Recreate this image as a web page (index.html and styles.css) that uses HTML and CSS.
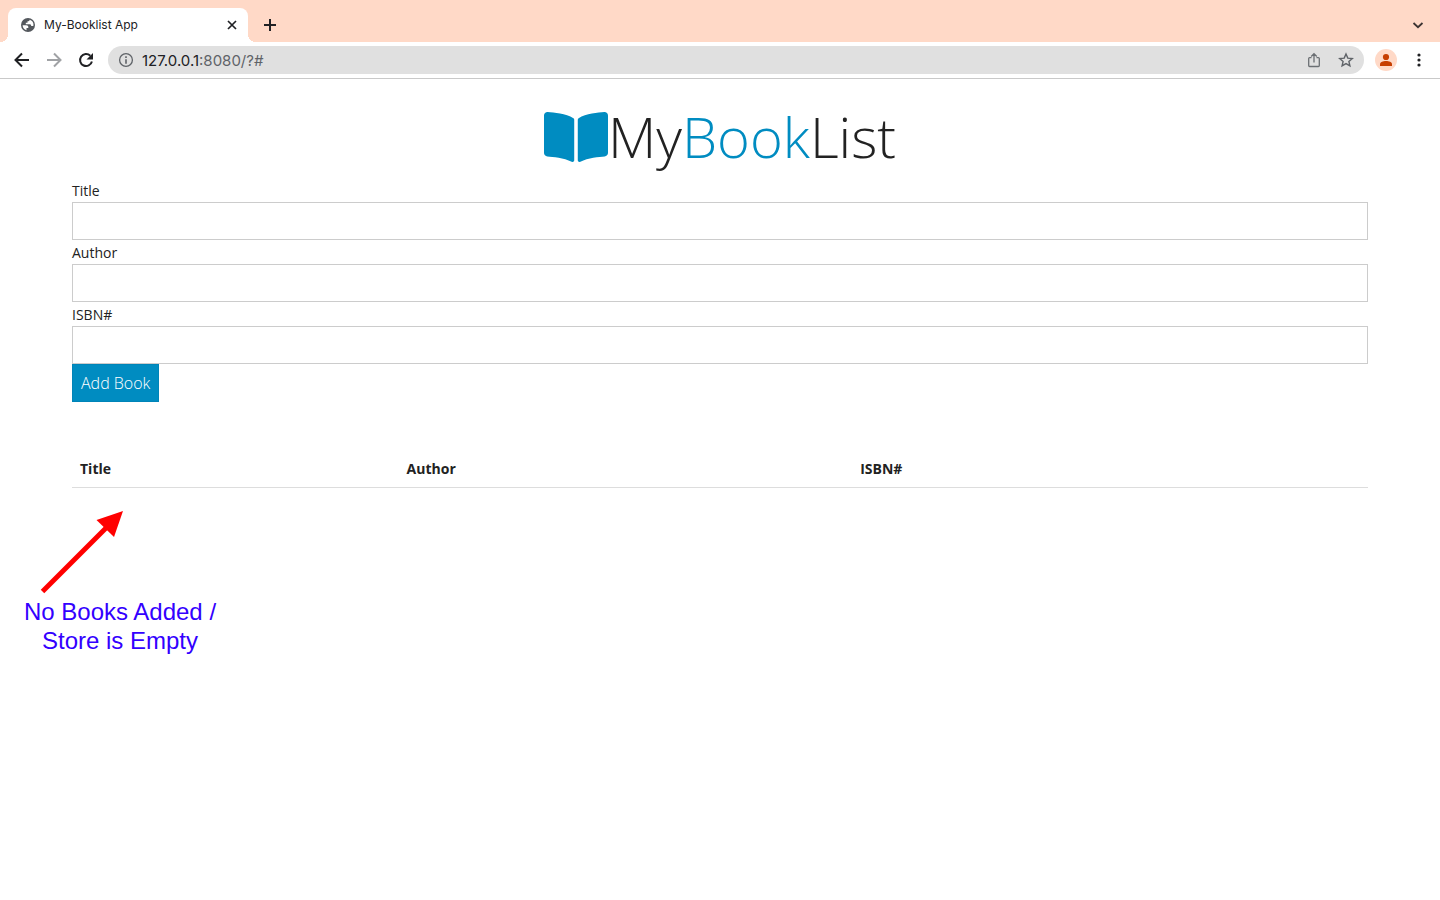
FILE: index.html
```html
<!DOCTYPE html>
<html lang="en">
<head>
<meta charset="utf-8">
<meta name="viewport" content="width=device-width, initial-scale=1">
<title>My-Booklist App</title>
<link rel="stylesheet" href="styles.css">
</head>
<body>
<header class="browser">
  <div class="tabstrip">
    <div class="tab">
      <svg class="favicon" viewBox="0 0 16 16" width="16" height="16" aria-hidden="true"><circle cx="8" cy="8" r="7" fill="#54585d"/><path d="M2.6 8.3 6.2 8.3c1.5 0 2.1.8 2.1 1.7v1.1H6.5v2.2C4.200 12.800 2.700 10.700 2.600 8.300zM9.700 2.800c-.2 1.200-1 1.500-2.200 1.500v1.500H5.800v1.500h3.800c1 0 1.600.6 1.600 1.700h2.100c.8-2.700-.8-5.400-3.600-6.200z" fill="#fff"/></svg>
      <span class="tab-title">My-Booklist App</span>
      <button class="icon-btn tab-close" type="button" aria-label="Close tab"><svg viewBox="0 0 16 16" width="16" height="16"><path d="M4 4l8 8M12 4l-8 8" stroke="#202124" stroke-width="1.700" fill="none"/></svg></button>
    </div>
    <button class="icon-btn new-tab" type="button" aria-label="New tab"><svg viewBox="0 0 16 16" width="16" height="16"><path d="M8 2v12M2 8h12" stroke="#202124" stroke-width="2" fill="none"/></svg></button>
    <button class="icon-btn tab-search" type="button" aria-label="Search tabs"><svg viewBox="0 0 16 16" width="16" height="16"><path d="M3.500 6 8 10.200 12.500 6" stroke="#3c3331" stroke-width="1.800" fill="none"/></svg></button>
  </div>
  <div class="toolbar">
    <button class="icon-btn" type="button" aria-label="Back"><svg viewBox="0 0 16 16" width="16" height="16"><path d="M15 8H2M8 1.500 1.500 8 8 14.500" stroke="#202124" stroke-width="2" fill="none"/></svg></button>
    <button class="icon-btn" type="button" aria-label="Forward"><svg viewBox="0 0 16 16" width="16" height="16"><path d="M1 8h13M8 1.500 14.500 8 8 14.500" stroke="#a0a2a5" stroke-width="2" fill="none"/></svg></button>
    <button class="icon-btn" type="button" aria-label="Reload"><svg viewBox="0 0 16 16" width="16" height="16"><path d="M13.900 9.500A6 6 0 1 1 12.300 3.800" stroke="#202124" stroke-width="2" fill="none"/><path d="M15 1v6.500H8.500z" fill="#202124"/></svg></button>
    <div class="address">
      <svg viewBox="0 0 16 16" width="16" height="16" aria-hidden="true"><circle cx="8" cy="8" r="6.400" fill="none" stroke="#5f6368" stroke-width="1.300"/><path d="M7.200 4.300h1.600v1.600H7.200zM7.200 7.200h1.600v4.500H7.200z" fill="#5f6368"/></svg>
      <span class="url">127.0.0.1<span class="url-rest">:8080/?#</span></span>
      <button class="icon-btn" type="button" aria-label="Share"><svg viewBox="0 0 16 16" width="16" height="16"><path d="M5.500 5.700H3.600q-.9 0-.9.900v7q0 .9.900.9h8.800q.9 0 .9-.9v-7q0-.9-.9-.9h-1.900M8 10.500V1.800M5.200 4.500 8 1.700l2.800 2.800" stroke="#6b6f73" stroke-width="1.300" fill="none"/></svg></button>
      <button class="icon-btn" type="button" aria-label="Bookmark this page"><svg viewBox="0 0 16 16" width="16" height="16"><path d="M8 2l1.800 4.100 4.500.4-3.400 3 1 4.400L8 11.600l-3.900 2.300 1-4.400-3.400-3 4.500-.4z" stroke="#5f6368" stroke-width="1.400" fill="none"/></svg></button>
    </div>
    <button class="icon-btn profile" type="button" aria-label="Profile"><svg viewBox="0 0 22 22" width="22" height="22"><circle cx="11" cy="11" r="11" fill="#ffd9c7"/><circle cx="11" cy="8" r="3.100" fill="#c73e00"/><path d="M5 17v-1.600c0-2.200 3-3.300 6-3.300s6 1.100 6 3.300V17z" fill="#c73e00"/></svg></button>
    <button class="icon-btn" type="button" aria-label="Menu"><svg viewBox="0 0 16 16" width="16" height="16" fill="#202124"><circle cx="8" cy="3" r="1.600"/><circle cx="8" cy="8" r="1.600"/><circle cx="8" cy="13" r="1.600"/></svg></button>
  </div>
</header>
<main class="container">
  <h1 class="brand">
    <svg viewBox="0 32 576 448" width="64" height="50" aria-hidden="true"><path fill="#008cc1" d="M542.220 32.050c-54.800 3.110-163.720 14.430-230.960 55.590-4.640 2.840-7.270 7.890-7.270 13.170v363.870c0 11.550 12.630 18.850 23.280 13.490 69.180-34.820 169.230-44.320 218.700-46.920 16.890-.89 30.020-14.430 30.020-30.660V62.750c.01-17.710-15.350-31.740-33.770-30.700zM264.730 87.640C197.500 46.480 88.580 35.170 33.780 32.050 15.360 31.010 0 45.040 0 62.750V400.600c0 16.240 13.130 29.780 30.020 30.660 49.490 2.600 149.590 12.110 218.770 46.950 10.620 5.350 23.210-1.940 23.210-13.460V100.630c0-5.290-2.620-10.140-7.270-12.990z"/></svg>
    <span>My<span class="accent">Book</span>List</span>
  </h1>
  <form class="book-form" action="#">
    <label class="label" for="title">Title</label>
    <input class="field" id="title" type="text">
    <label class="label" for="author">Author</label>
    <input class="field" id="author" type="text">
    <label class="label" for="isbn">ISBN#</label>
    <input class="field" id="isbn" type="text">
    <button class="submit" type="submit">Add Book</button>
  </form>
  <table class="books">
    <thead>
      <tr><th class="col-title">Title</th><th class="col-author">Author</th><th>ISBN#</th></tr>
    </thead>
    <tbody></tbody>
  </table>
</main>
<aside class="note">
  <svg class="arrow" viewBox="0 0 84 84" width="84" height="84" aria-hidden="true"><path d="M2.500 81.500 68 16" stroke="#f00" stroke-width="5"/><path d="M83 1 56.500 10 74 27z" fill="#f00"/></svg>
  <p class="note-text">No Books Added /<br>Store is Empty</p>
</aside>
</body>
</html>
```
FILE: styles.css
```css
* { box-sizing: border-box; }
body {
  margin: 0;
  background: #fff;
  color: #222;
  font-family: "Open Sans", "Noto Sans", sans-serif;
}
.browser { font-family: Inter, Roboto, sans-serif; }
.icon-btn {
  display: flex;
  flex: none;
  padding: 0;
  border: 0;
  background: none;
}
.tabstrip {
  display: flex;
  align-items: center;
  height: 42px;
  padding: 8px 14px 0 8px;
  background: #ffd9c7;
}
.tab {
  position: relative;
  display: flex;
  align-items: center;
  gap: 8px;
  width: 240px;
  height: 34px;
  padding: 0 8px 0 12px;
  border-radius: 8px 8px 0 0;
  background: #fff;
}
.tab::before,
.tab::after {
  content: "";
  position: absolute;
  bottom: 0;
  width: 8px;
  height: 8px;
}
.tab::before {
  right: 100%;
  background: radial-gradient(circle at 0 0, #ffd9c7 8px, #fff 8px);
}
.tab::after {
  left: 100%;
  background: radial-gradient(circle at 100% 0, #ffd9c7 8px, #fff 8px);
}
.tab-title { flex: 1; padding-bottom: 2px; color: #202124; font-size: 12px; }
.new-tab { margin-left: 14px; }
.tab-search { margin-left: auto; }
.toolbar {
  display: flex;
  align-items: center;
  gap: 16px;
  height: 37px;
  padding: 0 13px 0 14px;
  border-bottom: 1px solid #c9c9c9;
}
.address {
  display: flex;
  flex: 1;
  align-items: center;
  gap: 16px;
  height: 28px;
  margin-left: -2px;
  padding: 0 10px;
  border-radius: 14px;
  background: #e0e0e0;
}
.url { flex: 1; margin-left: -8px; color: #202124; font-size: 15px; }
.url-rest { color: #5f6368; }
.profile { margin: 0 -2px 0 -5px; }
.container { padding: 16px 72px 0; }
.brand {
  display: flex;
  justify-content: center;
  align-items: flex-start;
  margin: 0;
  padding-top: 17px;
  font-size: 56px;
  font-weight: 300;
  line-height: 48px;
}
.accent { color: #008cc1; }
.book-form { margin-top: 16px; }
.label {
  display: block;
  padding-top: 2px;
  font-size: 14px;
  line-height: 22px;
}
.field {
  display: block;
  width: 100%;
  height: 38px;
  padding: 8px;
  border: 1px solid #ccc;
  background: #fff;
  font: inherit;
}
.submit {
  display: block;
  height: 38px;
  padding: 0 8px;
  border: 1px solid #0084b8;
  background: #008cc1;
  color: #fff;
  font: 300 16px/24px "Open Sans", "Noto Sans", sans-serif;
}
.books {
  width: 100%;
  margin-top: 48px;
  border-collapse: collapse;
  table-layout: fixed;
  font-size: 14px;
  line-height: 21px;
}
.books th {
  padding: 8px;
  border-bottom: 1px solid #ddd;
  text-align: left;
  font-weight: 700;
}
.col-title { width: 25.2%; }
.col-author { width: 35%; }
.note { width: 240px; padding-top: 22px; }
.arrow { display: block; margin-left: 40px; }
.note-text {
  margin: 3px 0 0;
  color: #30f;
  font: 24px/29px "Liberation Sans", Arial, sans-serif;
  text-align: center;
}
```
